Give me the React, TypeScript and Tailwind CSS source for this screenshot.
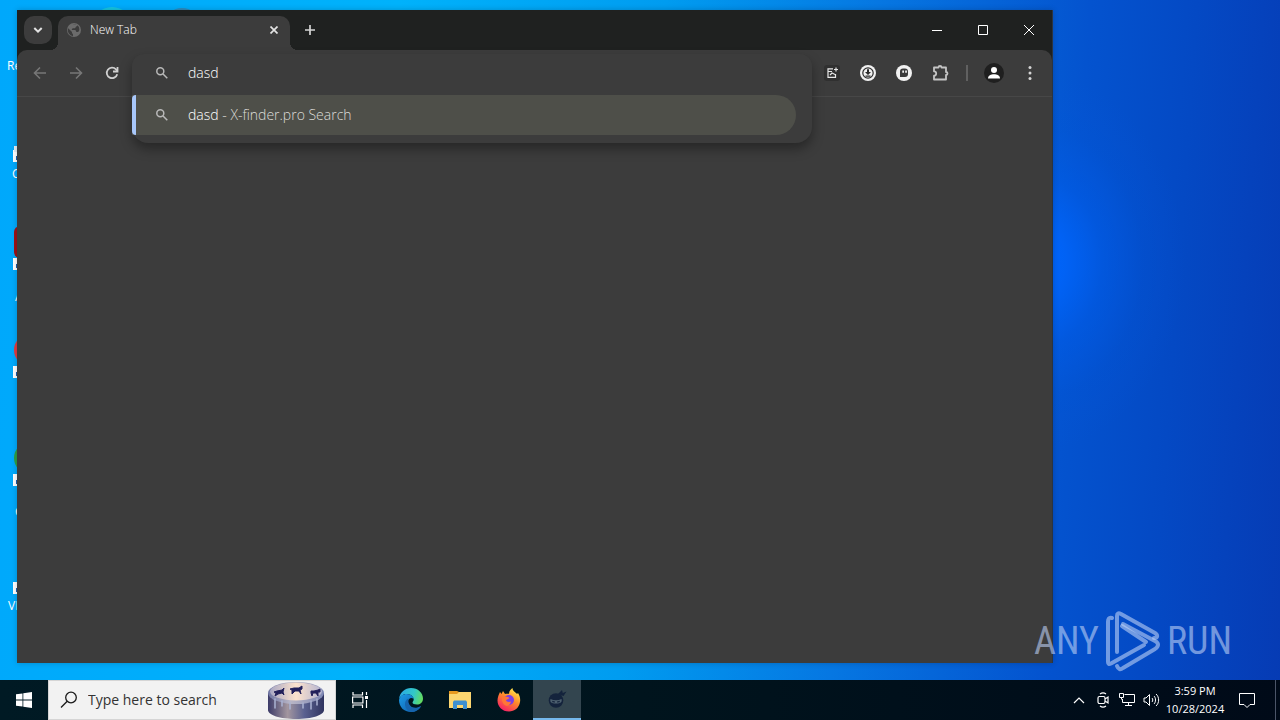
import { useState } from 'react'
import type { ReactNode } from 'react'

// labels of the desktop shortcuts, most of each one is hidden behind the window
const shortcuts = [
  { label: 'Recycle Bin', top: 59, left: 7, arrow: 0, color: '', radius: 0 },
  { label: 'CCleaner', top: 167, left: 12, arrow: 150, color: '', radius: 0 },
  { label: 'Acrobat', top: 290, left: 15, arrow: 258, color: '#9c1217', radius: 6 },
  { label: 'Opera', top: 398, left: 17, arrow: 366, color: '#e23b3f', radius: 16 },
  { label: 'Chrome', top: 505, left: 15, arrow: 474, color: '#2f9e44', radius: 16 },
  { label: 'VLC media player', top: 599, left: 8, arrow: 582, color: '', radius: 0 },
]

function Desktop() {
  return (
    <div className="absolute inset-0 overflow-hidden bg-[linear-gradient(94deg,#00a8fb_0%,#00b2fb_30%,#009cf0_50%,#0677e2_66%,#0453cf_82%,#0449c4_90%,#063bb4_100%)]">
      <div className="absolute inset-0 bg-[radial-gradient(ellipse_150px_190px_at_1035px_262px,#0066ff_0%,#0064fae0_20%,#005eee80_45%,#0058e030_72%,#0052d000_100%)]" />
      <div className="absolute top-[7px] left-[92px] size-10 rounded-full bg-[#16c5e0]" />
      <div className="absolute top-[8px] left-[164px] size-9 rounded-full bg-[#2d8bbd]" />
      {shortcuts.map((s) => (
        <div key={s.label}>
          {s.color && (
            <span
              className="absolute left-[14px] size-8"
              style={{ top: s.arrow - 32, background: s.color, borderRadius: s.radius }}
            />
          )}
          {s.arrow > 0 && (
            <svg className="absolute left-[13px]" style={{ top: s.arrow }} width="12" height="12" viewBox="0 0 12 12">
              <path d="M0 0h12v12H0z" fill="#fff" />
              <path d="M3 10V6h3V3l4 4-4 3V8H5v2z" fill="#1c5fae" />
            </svg>
          )}
          {s.label === 'CCleaner' && (
            <span className="absolute top-[146px] left-[14px] h-[6px] w-2 bg-[#e4eef5]" />
          )}
          <span className="absolute text-xs leading-[14px] font-normal whitespace-nowrap text-white" style={{ top: s.top, left: s.left }}>
            {s.label}
          </span>
        </div>
      ))}
    </div>
  )
}

function IconButton({ label, className = '', children }: { label: string; className?: string; children: ReactNode }) {
  return (
    <button type="button" aria-label={label} className={`flex shrink-0 items-center justify-center ${className}`}>
      {children}
    </button>
  )
}

function SearchIcon() {
  return (
    <svg width="16" height="16" viewBox="0 0 16 16" fill="none" stroke="#b9b9b9" strokeWidth="1.5" className="shrink-0">
      <circle cx="6.300" cy="6.300" r="3.500" />
      <path d="m9 9 4.300 4.300" />
    </svg>
  )
}

function TabStrip() {
  return (
    <div className="flex h-10 items-start bg-[#1f2120] pl-[7px]">
      <IconButton label="Search tabs" className="mt-[6px] size-7 rounded-[10px] bg-[#3c3c3c]">
        <svg width="12" height="12" viewBox="0 0 12 12" fill="none" stroke="#e3e3e3" strokeWidth="2">
          <path d="m2.300 4 3.700 3.700L9.700 4" />
        </svg>
      </IconButton>

      {/* active tab, the two corner pieces give it the flared foot */}
      <div className="relative mt-[6px] ml-[6px] flex h-[34px] w-[232px] items-center rounded-t-[10px] bg-[#3c3c3c] pb-[6px] pl-2">
        <span className="absolute bottom-0 -left-2 size-2 bg-[radial-gradient(circle_at_0_0,#1f2120_8px,#3c3c3c_8px)]" />
        <span className="absolute -right-2 bottom-0 size-2 bg-[radial-gradient(circle_at_100%_0,#1f2120_8px,#3c3c3c_8px)]" />
        <svg width="16" height="16" viewBox="0 0 16 16">
          <circle cx="8" cy="8" r="7" fill="#6b6b6b" />
          <path d="M2.200 6.200 6 10v1.200L7 12v2.200A6 6 0 0 1 2.200 6.200ZM7 2.400c2-.6 3.600 0 4.600 1L10 4.800 9 6.200H6.600L5.600 8h3.800l1 2h1.800l1-1.600c.6-3-1-5-3-5.800Z" fill="#3c3c3c" />
        </svg>
        <span className="ml-2 grow text-xs text-white">New Tab</span>
        <IconButton label="Close tab" className="mr-2 size-4">
          <svg width="8" height="8" viewBox="0 0 8 8" stroke="#e3e3e3" strokeWidth="1.700">
            <path d="m.5.5 7 7M7.500.5l-7 7" />
          </svg>
        </IconButton>
      </div>

      <IconButton label="New tab" className="mt-[6px] ml-[6px] size-7">
        <svg width="12" height="12" viewBox="0 0 12 12" stroke="#d5d5d5" strokeWidth="1.700">
          <path d="M6 1v10M1 6h10" />
        </svg>
      </IconButton>

      <div className="ml-auto flex h-10">
        <IconButton label="Minimize" className="w-[46px]">
          <svg width="10" height="10" viewBox="0 0 10 10" stroke="#fff">
            <path d="M0 5.500h10" />
          </svg>
        </IconButton>
        <IconButton label="Maximize" className="w-[46px]">
          <svg width="10" height="10" viewBox="0 0 10 10" fill="none" stroke="#fff">
            <path d="M.5.5h9v9h-9z" />
          </svg>
        </IconButton>
        <IconButton label="Close" className="w-[46px]">
          <svg width="10" height="10" viewBox="0 0 10 10" stroke="#fff">
            <path d="m0 0 10 10M10 0 0 10" />
          </svg>
        </IconButton>
      </div>
    </div>
  )
}

function Omnibox() {
  const [query, setQuery] = useState('dasd')

  return (
    <div className="relative ml-[6px] h-full grow">
      {/* the popup hangs below the toolbar, over the page */}
      <div className="absolute inset-x-0 top-1 z-10 rounded-b-2xl rounded-t-xl bg-[#3c3c3c] pb-2 shadow-[0_6px_12px_rgba(0,0,0,0.35)]">
        <label className="mb-[3px] flex h-[38px] items-center gap-[18px] pl-[22px]">
          <SearchIcon />
          <input
            aria-label="Search or enter address"
            value={query}
            onChange={(e) => setQuery(e.target.value)}
            className="grow bg-transparent text-sm text-white outline-none"
          />
        </label>
        <button
          type="button"
          className="flex h-10 w-[calc(100%-16px)] items-center gap-[18px] rounded-r-full bg-[#4e4f49] text-left text-sm text-[#dcdcd8]"
        >
          <span className="h-full w-1 rounded-l bg-[#a8c7fa]" />
          <SearchIcon />
          <span>
            <span className="text-white">dasd</span> - X-finder.pro Search
          </span>
        </button>
      </div>
    </div>
  )
}

function Toolbar() {
  return (
    <div className="flex h-[47px] items-center rounded-t-[10px] border-b border-[#474747] bg-[#3c3c3c] pl-[9px]">
      <IconButton label="Back" className="size-7">
        <svg width="16" height="16" viewBox="0 0 16 16" fill="none" stroke="#777" strokeWidth="1.600">
          <path d="M14 8H3M8 2.500 2.500 8 8 13.500" />
        </svg>
      </IconButton>
      <IconButton label="Forward" className="ml-2 size-7">
        <svg width="16" height="16" viewBox="0 0 16 16" fill="none" stroke="#777" strokeWidth="1.600">
          <path d="M2 8h11M8 2.500 13.500 8 8 13.500" />
        </svg>
      </IconButton>
      <IconButton label="Reload" className="ml-2 size-7">
        <svg width="16" height="16" viewBox="0 0 16 16" fill="none" stroke="#d0d0d0" strokeWidth="1.800">
          <path d="M13.200 9.200A5.300 5.300 0 1 1 12 4.300L13.500 6" />
          <path d="M13.500 2v4.500H9" />
        </svg>
      </IconButton>

      <Omnibox />

      <div className="flex items-center gap-2 pr-2 pl-[6px]">
        <IconButton label="Screenshot extension" className="size-7">
          <svg width="16" height="16" viewBox="0 0 16 16" fill="none" stroke="#e6e6e6" strokeWidth="1.200">
            <rect width="16" height="16" rx="3" fill="#303030" stroke="none" />
            <path d="M9 3.800H4v8.600h7.500V9" />
            <path d="M12 2.500v4M10 4.500h4M4 6.500h4M6 10l2-2 3 1.500" />
          </svg>
        </IconButton>
        <IconButton label="Downloader extension" className="size-7">
          <svg width="16" height="16" viewBox="0 0 16 16">
            <circle cx="8" cy="8" r="8" fill="#f2f2f2" />
            <circle cx="8" cy="8" r="5.200" fill="none" stroke="#2d2d2d" strokeWidth="1.200" />
            <path d="M7 4.200h2V7h2L8 10 5 7h2zM5.500 10.500h5v1.200h-5z" fill="#2d2d2d" />
          </svg>
        </IconButton>
        <IconButton label="Ghost extension" className="size-7">
          <svg width="16" height="16" viewBox="0 0 16 16">
            <circle cx="8" cy="8" r="8" fill="#f2f2f2" />
            <path d="M4 6.500a3 3 0 0 1 3-3h2a3 3 0 0 1 3 3v2.500a3 3 0 0 1-3 3H4z" fill="#3a3a3a" />
            <path d="M6.300 5.500h1.700v2.200H6.300zM9.200 5.500h1.700v2.200H9.200z" fill="#f2f2f2" />
          </svg>
        </IconButton>
        <IconButton label="Extensions" className="size-7">
          <svg width="18" height="18" viewBox="0 0 18 18" fill="none" stroke="#c4c4c4" strokeWidth="1.800" strokeLinejoin="round">
            <path d="M3 3.500h4.500a1.500 1.500 0 0 1 3 0H15v4.500a1.500 1.500 0 0 1 0 3v4.500H3v-3.800a2.200 2.200 0 0 0 0-4.400z" />
          </svg>
        </IconButton>
        <span className="mr-1 ml-1 h-4 w-[2px] bg-[#606060]" />
        <IconButton label="Profile" className="size-7">
          <svg width="20" height="20" viewBox="0 0 20 20">
            <circle cx="10" cy="10" r="10" fill="#1f1f1f" />
            <circle cx="10" cy="7" r="3" fill="#fff" />
            <path d="M4 15.500c0-3 3-4.300 6-4.300s6 1.300 6 4.300z" fill="#fff" />
          </svg>
        </IconButton>
        <IconButton label="Menu" className="size-7">
          <svg width="4" height="16" viewBox="0 0 4 16" fill="#d5d5d5">
            <circle cx="2" cy="2.500" r="1.500" />
            <circle cx="2" cy="8" r="1.500" />
            <circle cx="2" cy="13.500" r="1.500" />
          </svg>
        </IconButton>
      </div>
    </div>
  )
}

// translucent logo in the corner of the desktop
function Watermark() {
  return (
    <div className="pointer-events-none absolute right-[48px] bottom-[8px] z-20 flex items-center gap-[6px] font-['Roboto_Condensed','Roboto',sans-serif] text-[38px] leading-[62px] font-normal text-[#bcd0f5]/60">
      <span>ANY</span>
      <svg width="56" height="62" viewBox="0 0 56 62" fill="none" stroke="currentColor" strokeWidth="4" strokeLinejoin="round" strokeLinecap="round">
        <path d="M7 8C4 7 3 9 3 12v40q0 3 3 1.500L39 35M41 32 17 16" />
        <path d="M12 42V6q0-4 4-2L50 23c3 2 3 5-1 5" />
        <path d="M12 56q2 5 6 2l32-19c4-3 4-6 0-8L18 14" />
      </svg>
      <span>RUN</span>
    </div>
  )
}

function Cake() {
  return (
    <svg width="58" height="38" viewBox="0 0 58 38">
      <defs>
        <linearGradient id="side" x1="0" x2="1">
          <stop offset="0" stopColor="#3b3a68" />
          <stop offset=".35" stopColor="#a3969f" />
          <stop offset=".65" stopColor="#5a6190" />
          <stop offset="1" stopColor="#30345f" />
        </linearGradient>
        <linearGradient id="rim" x1="0" x2="1">
          <stop offset="0" stopColor="#6f75a2" />
          <stop offset=".4" stopColor="#b9b6c6" />
          <stop offset="1" stopColor="#7f88b4" />
        </linearGradient>
        <linearGradient id="top" x1="0" x2="1">
          <stop offset="0" stopColor="#a9a8c4" />
          <stop offset=".5" stopColor="#fde3cd" />
          <stop offset="1" stopColor="#b4b4d0" />
        </linearGradient>
      </defs>
      <path d="M1 12v17c0 5 12 9 28 9s28-4 28-9V12z" fill="url(#side)" />
      <ellipse cx="29" cy="12" rx="28" ry="11" fill="url(#rim)" />
      <ellipse cx="29" cy="10.500" rx="26" ry="9" fill="url(#top)" />
      <path d="M8 18v9M15 20v5M23 22v6M36 22v5M44 20v8M50 18v6" stroke="#aab2d2" strokeWidth="1.500" strokeLinecap="round" />
      <path
        d="M7 11l3-1 5-1 2-2-1 4 1 3-2-2-4 1-3 2 1-3zM23 8l4-1 5 0 3-2 0 3-2 1 1 4-2-3h-4l-3 3 0-4zM44 10l3 0 4-1 2-1 0 3-2 0 0 4-2-3-3 0-1 3-1-3z"
        fill="#22205a"
        stroke="#22205a"
      />
    </svg>
  )
}

function Tray() {
  return (
    <div className="ml-auto flex h-full items-center">
      <IconButton label="Show hidden icons" className="h-full w-6">
        <svg width="12" height="8" viewBox="0 0 12 8" fill="none" stroke="#fff" strokeWidth="1.200">
          <path d="m1 7 5-5 5 5" />
        </svg>
      </IconButton>
      <IconButton label="Meet now" className="h-full w-6">
        <svg width="14" height="18" viewBox="0 0 14 18" fill="none" stroke="#fff" strokeWidth="1.200">
          <path d="M4 3c2-1.600 4-1.600 6 0M4 15c2 1.600 4 1.600 6 0" />
          <rect x="2" y="5.500" width="7" height="7" rx="1.500" />
          <path d="m9 8 3-2v6L9 10" />
        </svg>
      </IconButton>
      <IconButton label="Network" className="h-full w-6">
        <svg width="17" height="16" viewBox="0 0 17 16" fill="none" stroke="#fff">
          <path d="M5.500 2.500h10v8h-12V7M9.500 10.500v3M6 13.500h7M.5 1.500h4v4h-4zM2.500 5.500v2" />
        </svg>
      </IconButton>
      <IconButton label="Volume" className="h-full w-6">
        <svg width="17" height="14" viewBox="0 0 17 14" fill="none" stroke="#fff">
          <path d="M1 5h2l3.500-3.500v11L3 9H1zM9 5c1 1 1 3 0 4M11 3c2 2 2 6 0 8M13 1c3.500 3 3.500 9 0 12" />
        </svg>
      </IconButton>
      <button type="button" className="h-full w-16 text-center text-[11px] leading-[18px] font-normal whitespace-nowrap text-white">
        <span className="block">3:59 PM</span>
        <span className="block">10/28/2024</span>
      </button>
      <IconButton label="Notifications" className="h-full w-10">
        <svg width="16" height="16" viewBox="0 0 16 16" fill="none" stroke="#fff">
          <path d="M.5 1.500h15v11H11l-3 3-3-3H.5z" />
        </svg>
      </IconButton>
      <button type="button" aria-label="Show desktop" className="ml-2 h-full w-[5px] border-l border-[#4b5568]" />
    </div>
  )
}

function Taskbar() {
  return (
    <div className="relative flex h-10 shrink-0 items-center bg-[linear-gradient(90deg,#001a24_0%,#00141d_50%,#000a18_100%)]">
      <IconButton label="Start" className="h-full w-12">
        <svg width="16" height="16" viewBox="0 0 16 16" fill="#fff">
          <path d="M0 2.300 6.500 1.400v6.200H0zM7.300 1.300 16 0v7.600H7.300zM0 8.400h6.500v6.200L0 13.700zM7.300 8.400H16V16l-8.700-1.300z" />
        </svg>
      </IconButton>
      <label className="flex h-full w-72 items-center border border-[#d5d5d5] bg-[#f2f2f2] pl-[11px]">
        <svg width="18" height="18" viewBox="0 0 18 18" fill="none" stroke="#1a1a1a" strokeWidth="1.300" className="shrink-0">
          <circle cx="11" cy="6.500" r="5.300" />
          <path d="M7.200 10.300 1 16.500" />
        </svg>
        <input placeholder="Type here to search" aria-label="Type here to search" className="ml-[10px] w-0 grow bg-transparent text-sm font-normal text-black outline-none placeholder:text-[#333]" />
        <span className="mr-[10px] shrink-0">
          <Cake />
        </span>
      </label>

      <IconButton label="Task view" className="h-full w-12">
        <svg width="16" height="16" viewBox="0 0 16 16" fill="none" stroke="#fff" strokeWidth="1.200">
          <path d="M1 0v3h9.500V0M1 16v-3h9.500v3M.6 5h10.300v6H.6zM14.500 0v3M14.500 8v8" />
          <path d="M13 4h3v3h-3z" fill="#fff" stroke="none" />
        </svg>
      </IconButton>
      <IconButton label="Microsoft Edge" className="ml-[2px] h-full w-[49px]">
        <svg width="24" height="24" viewBox="0 0 24 24">
          <defs>
            <linearGradient id="edgeTop" x1="0" x2="1" y1=".3" y2=".5">
              <stop offset="0" stopColor="#2aa8e6" />
              <stop offset=".6" stopColor="#32c8c8" />
              <stop offset="1" stopColor="#63dc60" />
            </linearGradient>
            <linearGradient id="edgeBody" x1="0" x2="1" y1="0" y2="1">
              <stop offset="0" stopColor="#1d9be6" />
              <stop offset="1" stopColor="#0c59a8" />
            </linearGradient>
          </defs>
          <path d="M0 11C1 4 6 0 12 0c7 0 12 5 12 10.500 0 4-3 6-6 6-3 0-4.500-1-4.500-2 0-.8 1.200-1.200 1.200-3 0-2.500-2.500-5.500-7-5.500C4 6 1.500 8 0 11z" fill="url(#edgeTop)" />
          <path d="M0 12c1-4 4-6 7.700-6 4.500 0 7 3 7 5-2-2-5.500-1-5.700 2.500C8.800 18 13 20.500 17 20c2.500-.3 4-1.500 5-2-2 4-6 6-10 6C5 24 0 19 0 12z" fill="url(#edgeBody)" />
          <path d="M9.500 10.500C4 12.500 5 22 12 24c4 0 8-2 10-6-6 4-14 1-12.500-7.500z" fill="#1664ad" />
        </svg>
      </IconButton>
      <IconButton label="File Explorer" className="h-full w-[49px]">
        <svg width="22" height="18" viewBox="0 0 22 18">
          <path d="M0 0h8l2 1h12v4H0z" fill="#e79a20" />
          <path d="M0 3h8l2-2h12v16H0z" fill="#fcd670" />
          <path d="M4 18v-7l1-1.500h12l1 1.500v7h-4v-4H8v4z" fill="#3d8fd0" />
        </svg>
      </IconButton>
      <IconButton label="Firefox" className="h-full w-[49px]">
        <svg width="24" height="24" viewBox="0 0 24 24">
          <defs>
            <linearGradient id="fox" x1=".8" x2=".2" y1="0" y2="1">
              <stop offset="0" stopColor="#fff14f" />
              <stop offset=".45" stopColor="#ff8a2a" />
              <stop offset="1" stopColor="#f5156c" />
            </linearGradient>
          </defs>
          <path d="M3 4l1.500 2L6 3l2 3c1-.4 3-.3 4-.2C12 3 14 1 15.500 0c0 3 3 4 4.500 6l1-1c2 3 2.500 6 2 9-1 6-5.500 9.500-11 9.500C5 23.500.5 18.500.5 12.500.5 9 2 6 3 4z" fill="url(#fox)" />
          <circle cx="12" cy="12" r="5" fill="#7b3fe4" />
          <path d="M5 9c3-1 4 0 6 0l1.500 1c-1 1.500-3 1-3.500 2.500 1.500 2 4 1.500 5 1-.5 3-3 5-5.500 4C6 16.500 4.500 13 5 9z" fill="#ff7636" />
        </svg>
      </IconButton>
      <IconButton label="Ninja browser" className="h-full w-12 border-b-2 border-[#76b9ed] bg-[#33454f]">
        <svg width="20" height="20" viewBox="0 0 20 20">
          <path d="M11 5 15 1l.8 3 3.700-1.500L16.500 7z" fill="#14233c" />
          <circle cx="9" cy="11.500" r="7.300" fill="#14233c" />
          <path d="M3.500 10c3.500 1.800 7.500 1.800 11 0 .8 3-.5 4.500-5.500 4.500S2.700 13 3.500 10z" fill="#4c5f6e" />
          <path d="m5 11.800 3 .6v1.200l-2.500-.3zM13 11.800l-3 .6v1.200l2.500-.3z" fill="#14233c" />
        </svg>
      </IconButton>
      <Tray />
    </div>
  )
}

export default function App() {
  return (
    <div className="relative flex min-h-screen flex-col overflow-hidden font-['Open_Sans','Noto_Sans',sans-serif] font-light">
      <Desktop />
      <main className="relative flex grow flex-col pt-[10px] pr-[227px] pb-[17px] pl-[17px]">
        <section className="flex grow flex-col border-r border-[#2b3440] bg-[#3c3c3c] shadow-[0_0_6px_rgba(0,0,0,0.2)]">
          <TabStrip />
          <div className="bg-[#1f2120]">
            <Toolbar />
          </div>
          <div className="grow" />
        </section>
        <Watermark />
      </main>
      <Taskbar />
    </div>
  )
}
